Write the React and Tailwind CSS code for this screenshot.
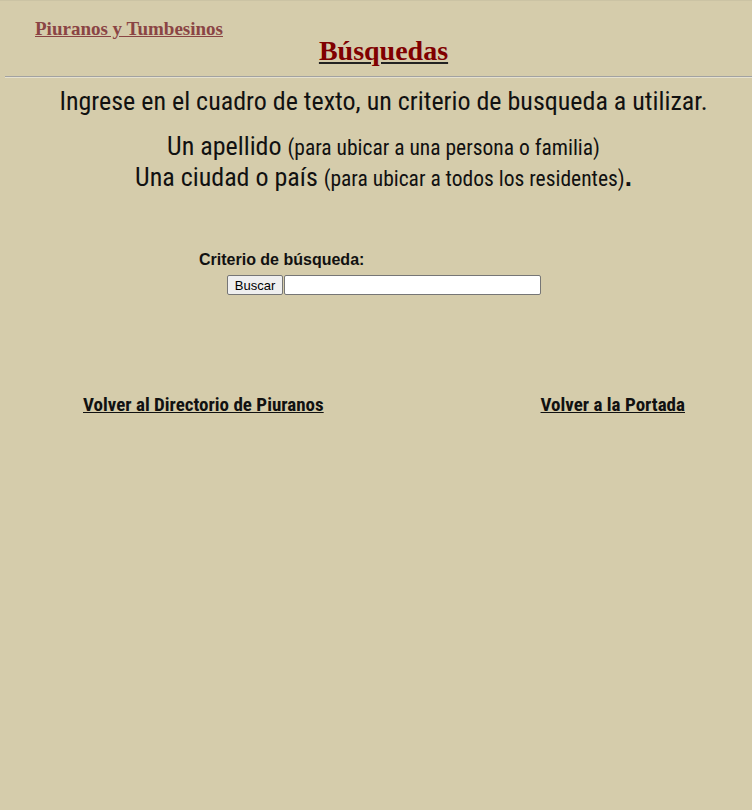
export default function App() {
  return (
    <div className="min-h-screen bg-[#d5ccab] border-t border-[#cbc3a4] text-[#111]">
      <header className="pl-[35px]">
        <a
          href="#"
          className="block w-fit mt-[19px] font-['Liberation_Serif',serif] font-bold text-[19px] leading-[18px] text-[#8a4444] underline"
        >
          Piuranos y Tumbesinos
        </a>
      </header>
      <div className="pl-[15px] text-center">
        <h1 className="-mt-px font-['Liberation_Serif',serif] font-bold text-[28px] leading-[28px] text-[#800000] underline decoration-[#222]">
          Búsquedas
        </h1>
      </div>
      <div className="ml-[5px] mt-[11px] border-t border-[#a2a2a2] border-b border-b-[#e6e1cf]" />

      <div className="pl-[15px] text-center font-['Roboto_Condensed','Liberation_Sans',sans-serif]">
        <p className="mt-[7px] text-[26px] leading-[32px]">
          Ingrese en el cuadro de texto, un criterio de busqueda a utilizar.
        </p>
        <div className="mt-[14px]">
          <p className="text-[26px] leading-[31px]">
            Un apellido <span className="text-[21.5px] leading-none">(para ubicar a una persona o familia)</span>
          </p>
          <p className="text-[26px] leading-[31px]">
            Una ciudad o país <span className="text-[21.5px] leading-none">(para ubicar a todos los residentes)</span>
            <span className="font-['Liberation_Sans',sans-serif] font-bold leading-none">.</span>
          </p>
        </div>
      </div>

      <form className="mt-[58px] ml-[199px] font-['Liberation_Sans',sans-serif]" onSubmit={(e) => e.preventDefault()}>
        <label className="block font-bold text-[16px] leading-[18px]">Criterio de búsqueda:</label>
        <div className="mt-[6px] ml-[28px] flex">
          <button
            type="submit"
            className="w-[56px] h-[20px] bg-[#efefef] border border-[#767676] rounded-[2px] text-[13px] leading-none text-black"
          >
            Buscar
          </button>
          <input
            type="text"
            className="ml-px w-[257px] h-[20px] bg-white border border-[#767676] rounded-[2px] outline-none"
          />
        </div>
      </form>

      <div className="mt-[99px] flex font-['Roboto_Condensed','Liberation_Sans',sans-serif] font-bold text-[19px] leading-[22px]">
        <a href="#" className="ml-[83px] underline text-[#111]">
          Volver al Directorio de Piuranos
        </a>
        <a href="#" className="ml-auto mr-[67px] underline text-[#111]">
          Volver a la Portada
        </a>
      </div>
    </div>
  );
}
